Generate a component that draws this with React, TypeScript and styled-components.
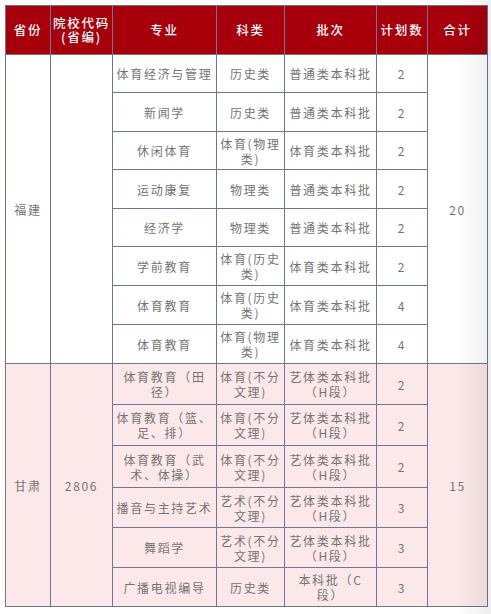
import * as React from 'react';
import styled, { createGlobalStyle } from 'styled-components';

const GlobalStyle = createGlobalStyle`
    html, body {
        margin: 0;
        padding: 0;
        background: #ffffff;
    }
`;

const Page = styled.div`
    position: relative;
    width: 491px;
    height: 614px;
    padding: 5px 0 0 5px;
    box-sizing: border-box;
    overflow: hidden;
    font-family: 'Noto Sans CJK SC', 'Noto Sans', sans-serif;
`;

const Shade = styled.div`
    position: absolute;
    top: 0;
    right: 0;
    width: 34px;
    height: 100%;
    background: linear-gradient(to right, rgba(0, 0, 0, 0), rgba(0, 0, 0, 0.07));
    pointer-events: none;
`;

const Table = styled.table`
    border-collapse: collapse;
    table-layout: fixed;
    width: 482px;
`;

const Head = styled.th`
    height: 48px;
    padding: 0;
    background: #a7000b;
    border: 1px solid #6a7798;
    color: #ffffff;
    font-size: 12.5px;
    font-weight: 500;
    letter-spacing: 1.8px;
    line-height: 14px;
    text-align: center;
    white-space: pre-line;
`;

const Row = styled.tr<{ $pink?: boolean; $h: number }>`
    height: ${(p) => p.$h}px;
    background: ${(p) => (p.$pink ? '#fce8e9' : '#ffffff')};
`;

const Cell = styled.td`
    padding: 0 2px;
    border: 1px solid #6a7798;
    color: #747474;
    font-size: 12px;
    letter-spacing: 1.7px;
    line-height: 15px;
    text-align: center;
    vertical-align: middle;
    white-space: pre-line;
`;

const cols = [45, 62, 104, 68, 92, 51, 60];
const heads = ['省份', '院校代码\n(省编)', '专业', '科类', '批次', '计划数', '合计'];

const fujian: [string, string, string, string, number][] = [
    ['体育经济与管理', '历史类', '普通类本科批', '2', 38],
    ['新闻学', '历史类', '普通类本科批', '2', 39],
    ['休闲体育', '体育(物理\n类)', '体育类本科批', '2', 38],
    ['运动康复', '物理类', '普通类本科批', '2', 39],
    ['经济学', '物理类', '普通类本科批', '2', 38],
    ['学前教育', '体育(历史\n类)', '体育类本科批', '2', 39],
    ['体育教育', '体育(历史\n类)', '体育类本科批', '4', 39],
    ['体育教育', '体育(物理\n类)', '体育类本科批', '4', 39],
];

const gansu: [string, string, string, string, number][] = [
    ['体育教育（田\n径）', '体育(不分\n文理)', '艺体类本科批\n（H段）', '2', 41],
    ['体育教育（篮、\n足、排）', '体育(不分\n文理)', '艺体类本科批\n（H段）', '2', 41],
    ['体育教育（武\n术、体操）', '体育(不分\n文理)', '艺体类本科批\n（H段）', '2', 42],
    ['播音与主持艺术', '艺术(不分\n文理)', '艺体类本科批\n（H段）', '3', 40],
    ['舞蹈学', '艺术(不分\n文理)', '艺体类本科批\n（H段）', '3', 40],
    ['广播电视编导', '历史类', '本科批（C\n段）', '3', 39],
];

function App() {
    return (
        <Page>
            <GlobalStyle />
            <Table>
                <colgroup>
                    {cols.map((w, i) => (
                        <col key={i} style={{ width: w }} />
                    ))}
                </colgroup>
                <thead>
                    <tr>
                        {heads.map((h) => (
                            <Head key={h}>{h}</Head>
                        ))}
                    </tr>
                </thead>
                <tbody>
                    {fujian.map((r, i) => (
                        <Row key={'f' + i} $h={r[4]}>
                            {i === 0 && (
                                <>
                                    <Cell rowSpan={8}>福建</Cell>
                                    <Cell rowSpan={8} />
                                </>
                            )}
                            <Cell>{r[0]}</Cell>
                            <Cell>{r[1]}</Cell>
                            <Cell>{r[2]}</Cell>
                            <Cell>{r[3]}</Cell>
                            {i === 0 && <Cell rowSpan={8}>20</Cell>}
                        </Row>
                    ))}
                    {gansu.map((r, i) => (
                        <Row key={'g' + i} $h={r[4]} $pink>
                            {i === 0 && (
                                <>
                                    <Cell rowSpan={6}>甘肃</Cell>
                                    <Cell rowSpan={6}>2806</Cell>
                                </>
                            )}
                            <Cell>{r[0]}</Cell>
                            <Cell>{r[1]}</Cell>
                            <Cell>{r[2]}</Cell>
                            <Cell>{r[3]}</Cell>
                            {i === 0 && <Cell rowSpan={6}>15</Cell>}
                        </Row>
                    ))}
                </tbody>
            </Table>
            <Shade />
        </Page>
    );
}

export default App;
